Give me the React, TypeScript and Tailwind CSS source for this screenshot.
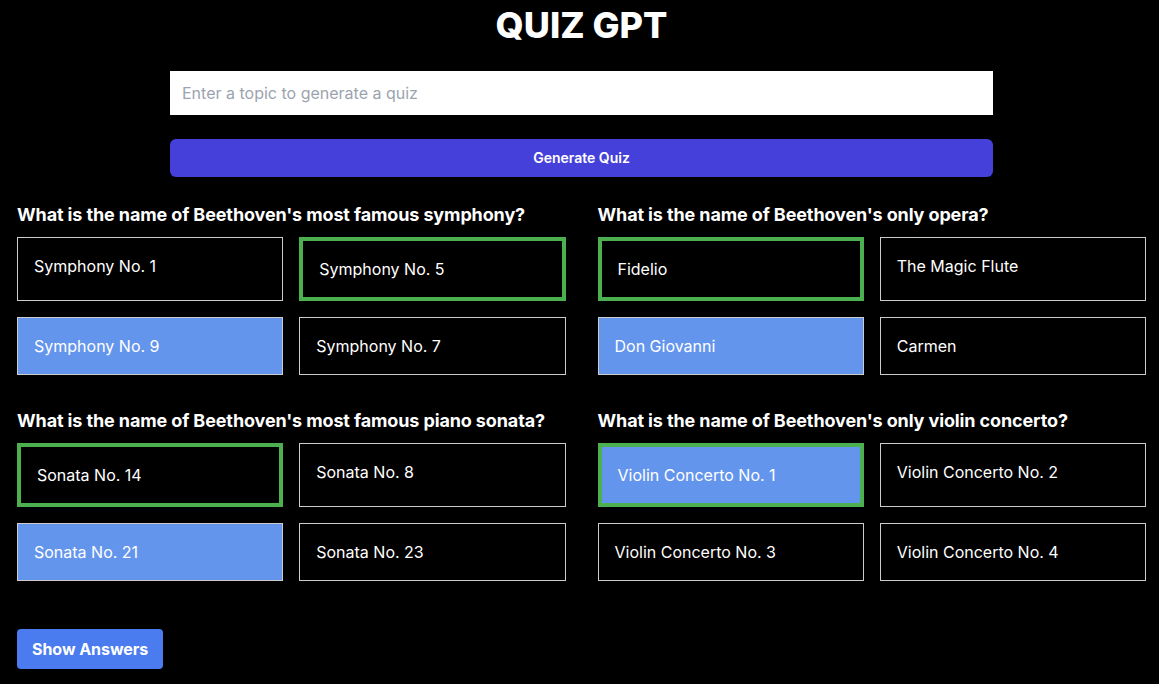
import React from "react";

type Q = { q: string; opts: { t: string; correct?: boolean; selected?: boolean }[] };

const questions: Q[] = [
  {
    q: "What is the name of Beethoven's most famous symphony?",
    opts: [
      { t: "Symphony No. 1" },
      { t: "Symphony No. 5", correct: true },
      { t: "Symphony No. 9", selected: true },
      { t: "Symphony No. 7" },
    ],
  },
  {
    q: "What is the name of Beethoven's only opera?",
    opts: [
      { t: "Fidelio", correct: true },
      { t: "The Magic Flute" },
      { t: "Don Giovanni", selected: true },
      { t: "Carmen" },
    ],
  },
  {
    q: "What is the name of Beethoven's most famous piano sonata?",
    opts: [
      { t: "Sonata No. 14", correct: true },
      { t: "Sonata No. 8" },
      { t: "Sonata No. 21", selected: true },
      { t: "Sonata No. 23" },
    ],
  },
  {
    q: "What is the name of Beethoven's only violin concerto?",
    opts: [
      { t: "Violin Concerto No. 1", correct: true, selected: true },
      { t: "Violin Concerto No. 2" },
      { t: "Violin Concerto No. 3" },
      { t: "Violin Concerto No. 4" },
    ],
  },
];

function Option({ t, correct, selected }: { t: string; correct?: boolean; selected?: boolean }) {
  const border = correct ? "border-4 border-[#4caf50] flex items-center" : "border border-[#cccccc]";
  const bg = selected ? "bg-[#6495ed]" : "bg-black";
  return <div className={`${border} ${bg} px-4 py-4 text-base leading-6 text-white`}>{t}</div>;
}

export default function App() {
  return (
    <div className="min-h-screen bg-black text-white pl-[17px] pr-[13px] font-['Inter','Liberation_Sans',sans-serif]">
      <h1 className="pt-[5px] text-center text-4xl leading-10 font-extrabold">QUIZ GPT</h1>
      <div className="mx-auto mt-[26px] flex w-[823px] flex-col gap-6">
        <input
          className="h-11 w-full bg-white px-3 text-base text-black placeholder:text-[#9ca3af] outline-none"
          placeholder="Enter a topic to generate a quiz"
        />
        <button className="h-[38px] w-full rounded-md bg-[#4540da] text-sm font-semibold text-white">
          Generate Quiz
        </button>
      </div>
      <div className="mt-6 grid grid-cols-2 gap-x-8 gap-y-8">
        {questions.map((q) => (
          <div key={q.q}>
            <h2 className="mb-2 text-lg leading-7 font-bold tracking-[-0.12px]">{q.q}</h2>
            <div className="grid grid-cols-2 gap-4">
              {q.opts.map((o) => (
                <Option key={o.t} {...o} />
              ))}
            </div>
          </div>
        ))}
      </div>
      <button className="mt-12 h-10 rounded bg-[#4a7bef] px-[15px] text-base font-bold tracking-[-0.05px] text-white">
        Show Answers
      </button>
    </div>
  );
}
